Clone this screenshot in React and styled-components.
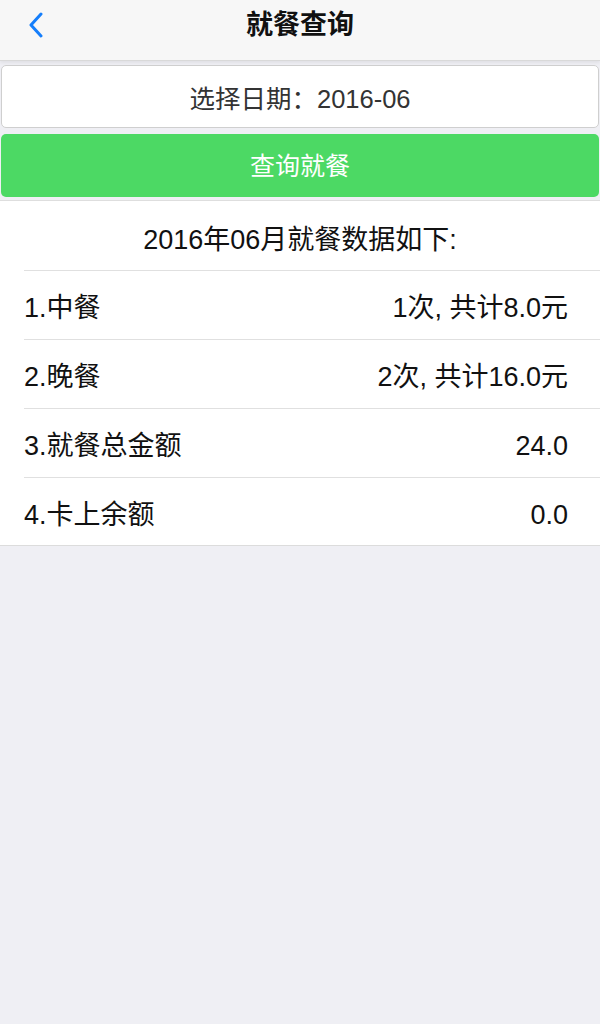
import React from 'react';
import styled, { createGlobalStyle } from 'styled-components';

const GlobalStyle = createGlobalStyle`
  html, body {
    margin: 0;
    padding: 0;
    background: #efeff4;
    font-family: "Liberation Sans", "Noto Sans CJK SC", sans-serif;
  }
`;

const Page = styled.div`
  width: 600px;
  min-height: 1024px;
  background: #efeff4;
`;

const NavBar = styled.header`
  position: relative;
  height: 60px;
  background: #f7f7f7;
  border-bottom: 1px solid #d9d9d9;
  box-shadow: 0 2px 3px rgba(0, 0, 0, 0.06);
  display: flex;
  align-items: center;
  justify-content: center;
`;

const BackButton = styled.a`
  position: absolute;
  left: 24px;
  top: 10px;
  width: 24px;
  height: 30px;
  display: flex;
  align-items: center;
  justify-content: center;
`;

const Title = styled.h1`
  margin: 0 0 16px;
  font-size: 27px;
  font-weight: bold;
  color: #111;
`;

const Form = styled.div`
  padding: 4px 1px 0;
  display: flex;
  flex-direction: column;
  gap: 6px;
`;

const DateField = styled.div`
  height: 61px;
  background: #fff;
  border: 1px solid #cfcfcf;
  border-radius: 5px;
  display: flex;
  align-items: center;
  justify-content: center;
  font-size: 25.5px;
  color: #333;
`;

const QueryButton = styled.button`
  height: 63px;
  border: none;
  border-radius: 5px;
  background: #4cd964;
  color: #fff;
  font-family: inherit;
  font-size: 25px;
  display: flex;
  align-items: center;
  justify-content: center;
  padding: 0 0 4px;
`;

const Result = styled.section`
  margin-top: 3px;
  background: #fff;
  border-top: 1px solid #dedede;
  border-bottom: 1px solid #dcdcdc;
`;

const Heading = styled.div`
  height: 69px;
  display: flex;
  align-items: center;
  justify-content: center;
  font-size: 27px;
  color: #111;
  padding-top: 3px;
  box-sizing: border-box;
`;

const List = styled.ul`
  margin: 0;
  padding: 0 0 0 24px;
  list-style: none;
`;

const Item = styled.li`
  box-sizing: border-box;
  height: 69px;
  padding: 3px 32px 0 0;
  border-top: 1px solid #e0e0e0;
  display: flex;
  align-items: baseline;
  justify-content: space-between;
  font-size: 27px;
  line-height: 68px;
  color: #111;
  overflow: hidden;

  &:last-child {
    height: 68px;
  }
`;

const rows = [
  ['1.中餐', '1次, 共计8.0元'],
  ['2.晚餐', '2次, 共计16.0元'],
  ['3.就餐总金额', '24.0'],
  ['4.卡上余额', '0.0'],
];

export default () => {
  return (
    <Page>
      <GlobalStyle />
      <NavBar>
        <BackButton href="#" aria-label="back">
          <svg width="16" height="26" viewBox="0 0 16 26">
            <path d="M13 2 L3 13 L13 24" fill="none" stroke="#157efb" strokeWidth="3" strokeLinecap="round" strokeLinejoin="round" />
          </svg>
        </BackButton>
        <Title>就餐查询</Title>
      </NavBar>
      <Form>
        <DateField>选择日期：2016-06</DateField>
        <QueryButton>查询就餐</QueryButton>
      </Form>
      <Result>
        <Heading>2016年06月就餐数据如下:</Heading>
        <List>
          {rows.map(([label, value]) => (
            <Item key={label}>
              <span>{label}</span>
              <span>{value}</span>
            </Item>
          ))}
        </List>
      </Result>
    </Page>
  );
};
